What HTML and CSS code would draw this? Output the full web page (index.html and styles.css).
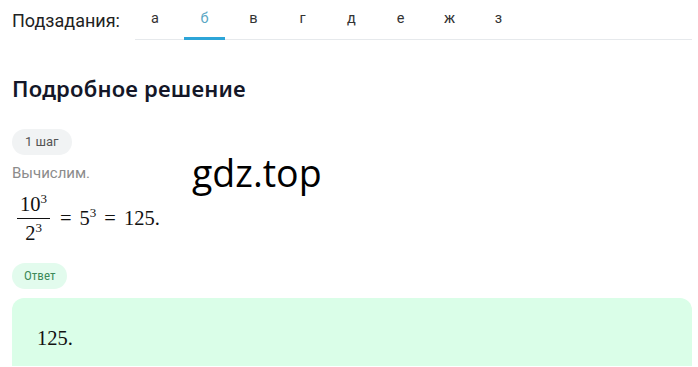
FILE: index.html
```html
<!DOCTYPE html>
<html lang="ru">
<head>
<meta charset="UTF-8">
<title>Подробное решение</title>
<link rel="stylesheet" href="styles.css">
</head>
<body>
<div class="subtasks">
  <span class="subtasks-label">Подзадания:</span>
  <div class="tabs">
    <span class="tab">а</span>
    <span class="tab active">б</span>
    <span class="tab">в</span>
    <span class="tab">г</span>
    <span class="tab">д</span>
    <span class="tab">е</span>
    <span class="tab">ж</span>
    <span class="tab">з</span>
  </div>
</div>

<h2 class="title">Подробное решение</h2>

<div class="step">
  <span class="pill">1 шаг</span>
  <div class="step-row">
    <div class="step-body">
      <p class="note">Вычислим.</p>
      <div class="math">
        <span class="frac">
          <span class="num">10<sup>3</sup></span>
          <span class="den">2<sup>3</sup></span>
        </span>
        <span class="eq">=</span>
        <span>5<sup>3</sup></span>
        <span class="eq">=</span>
        <span>125.</span>
      </div>
    </div>
    <div class="watermark">gdz.top</div>
  </div>
</div>

<span class="pill pill-green">Ответ</span>
<div class="answer">
  <span class="math">125.</span>
</div>
</body>
</html>
```

FILE: styles.css
```css
/* Page */
body {
  margin: 0;
  padding: 0 6px 0 12px;
  font-family: Roboto, "Noto Sans", sans-serif;
  color: #1d1d1f;
  background: #fff;
  overflow: hidden;
}

/* Subtask tabs */
.subtasks {
  display: flex;
  align-items: flex-end;
  height: 40px;
}

.subtasks-label {
  font-size: 18px;
  color: #222;
  width: 123px;
  padding-bottom: 9px;
}

.tabs {
  flex: 1;
  display: flex;
  border-bottom: 1px solid #e6e9ec;
}

.tab {
  width: 49px;
  text-align: center;
  font-size: 14.5px;
  color: #333;
  padding-bottom: 10px;
  border-bottom: 3px solid transparent;
  margin-bottom: -1px;
  box-sizing: border-box;
}

.tabs .tab:first-child {
  width: 45px;
  padding-right: 5px;
}

.tab.active {
  color: #5aa7c4;
  width: 41px;
  margin: 0 4px -1px 4px;
  border-bottom-color: #2da5d8;
}

/* Solution */
.title {
  margin: 33px 0 0;
  font-family: "Noto Sans", sans-serif;
  font-size: 22px;
  font-weight: 600;
  color: #141728;
  letter-spacing: 0.2px;
}

.step {
  margin-top: 26px;
}

.pill {
  display: inline-block;
  height: 26px;
  font-size: 13px;
  line-height: 26px;
  padding: 0 13px;
  border-radius: 13px;
  background: #f1f3f4;
  color: #555;
}

.step-row {
  display: flex;
  align-items: flex-start;
}

.step-body {
  width: 178px;
}

.note {
  margin: 8px 0 0;
  font-size: 15px;
  color: #8b8b8b;
  line-height: 20px;
}

.math {
  font-family: "Liberation Serif", "DejaVu Serif", serif;
  font-size: 20.5px;
  color: #111;
}

.math sup {
  font-size: 13px;
  vertical-align: 8px;
  line-height: 0;
}

.step .math {
  display: flex;
  align-items: center;
  margin-top: 7px;
  padding-left: 5px;
}

.frac {
  display: inline-flex;
  flex-direction: column;
  align-items: center;
  margin-right: 2px;
  line-height: 20px;
}

.num {
  padding: 4px 3px;
  border-bottom: 1px solid #111;
}

.den {
  padding: 4px 0;
}

.eq {
  margin: 0 8px;
}

.watermark {
  margin: -4px 0 0 2px;
  font-family: "Open Sans", sans-serif;
  font-size: 37.5px;
  color: #000;
  line-height: 44px;
}

/* Answer */
.pill-green {
  margin-top: 16px;
  background: #e2fbed;
  color: #3d8a59;
  font-family: "Roboto Condensed", "Liberation Sans Narrow", Roboto, sans-serif;
  font-stretch: condensed;
  padding: 0 12px;
}

.answer {
  margin-top: 9px;
  background: #dafee8;
  border-radius: 12px 12px 0 0;
  height: 68px;
  padding: 29px 25px 0;
  box-sizing: border-box;
}
```
